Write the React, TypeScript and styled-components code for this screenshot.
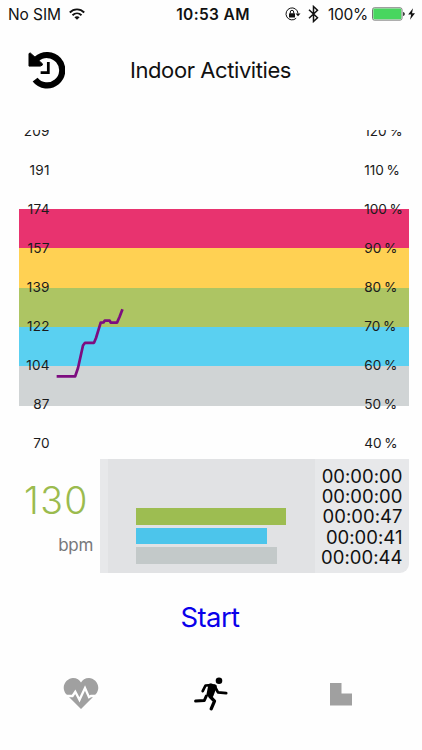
import React from "react";
import styled, { createGlobalStyle } from "styled-components";

const GlobalStyle = createGlobalStyle`
  * { box-sizing: border-box; }
  body { margin: 0; background: #fff; }
`;

const Screen = styled.main`
  display: flex;
  flex-direction: column;
  width: 422px;
  height: 750px;
  overflow: hidden;
  background: #fefefe;
  color: #111;
  font-family: Inter, "Liberation Sans", sans-serif;
`;

const StatusBar = styled.div`
  display: grid;
  grid-template-columns: 1fr auto 1fr;
  align-items: center;
  height: 28px;
  padding: 0 6px 0 8px;
  font-size: 15.5px;
  white-space: nowrap;
`;

const Carrier = styled.div`
  display: flex;
  align-items: center;
  gap: 8.5px;
  letter-spacing: -0.1px;
`;

const Clock = styled.div`
  padding-left: 2px;
  font-weight: 600;
  font-size: 15.5px;
  letter-spacing: 0.35px;
`;

const Indicators = styled.div`
  display: flex;
  align-items: center;
  justify-content: flex-end;
`;

const BluetoothSlot = styled.span`
  display: flex;
  margin-left: 7px;
`;

const Percent = styled.span`
  margin: 0 4px 0 9px;
  letter-spacing: -0.3px;
`;

const Header = styled.header`
  display: grid;
  grid-template-columns: 102px 1fr 102px;
  align-items: center;
  height: 84px;
  padding: 0 0 0 27.5px;
`;

const Title = styled.h1`
  margin: 0 0 0 0.5px;
  font-size: 22px;
  line-height: 28px;
  font-weight: 400;
  letter-spacing: -0.42px;
  white-space: nowrap;
`;

const Chart = styled.section`
  display: grid;
  height: 329.4px;
  margin: 18px 13px 0 19.3px;
  overflow: hidden;
  > * { grid-area: 1 / 1; }
`;

const Bands = styled.div`
  margin-top: 79.2px;
`;

const Band = styled.div<{ $color: string }>`
  height: 39.3px;
  background: ${(p) => p.$color};
`;

const Scale = styled.div`
  margin-top: -18.5px;
  font-size: 13.6px;
`;

const ScaleRow = styled.div`
  display: flex;
  align-items: center;
  justify-content: space-between;
  height: 39px;
  padding-right: 6px;
  color: #1b1b1b;
`;

const Rate = styled.span`
  width: 30.4px;
  text-align: right;
  letter-spacing: 0.2px;
`;

const Share = styled.span`
  width: 39px;
  white-space: nowrap;
  letter-spacing: -0.1px;
  word-spacing: -0.9px;
`;

const Summary = styled.section`
  display: flex;
  height: 114.1px;
  margin-right: 13px;
`;

const HeartRate = styled.div`
  width: 100px;
  padding-top: 20px;
`;

const RateValue = styled.div`
  padding-left: 24px;
  font-size: 37.5px;
  line-height: 44px;
  font-weight: 300;
  letter-spacing: 1.4px;
  color: #9bbb4e;
`;

const RateUnit = styled.div`
  padding-right: 7px;
  margin-top: 12px;
  font-size: 17px;
  line-height: 20px;
  text-align: right;
  letter-spacing: -0.3px;
  color: #77787b;
`;

const Zones = styled.div`
  display: flex;
  flex: 1;
  padding-left: 8px;
  background: #e7e8ea;
  border-radius: 0 0 9px 0;
`;

const ZoneBars = styled.div`
  display: flex;
  flex-direction: column;
  justify-content: flex-end;
  gap: 3px;
  width: 207px;
  padding: 0 0 9.6px 28.3px;
  background: #e1e2e4;
`;

const ZoneBar = styled.div<{ $color: string; $width: number }>`
  width: ${(p) => p.$width}px;
  height: 16.5px;
  background: ${(p) => p.$color};
`;

const ZoneTimes = styled.div`
  flex: 1;
  padding: 6.7px 6.5px 0 0;
  font-size: 18.5px;
  line-height: 20.2px;
  text-align: right;
  letter-spacing: 0.02px;
  white-space: nowrap;
`;

const StartButton = styled.button`
  align-self: center;
  height: 44px;
  margin-top: 21.5px;
  padding: 0 2px 0 0;
  border: 0;
  background: none;
  color: #0a00ea;
  font: 400 27.5px Inter, sans-serif;
  letter-spacing: -0.6px;
`;

const TabBar = styled.nav`
  display: grid;
  grid-template-columns: repeat(3, 130px);
  justify-content: center;
  justify-items: center;
  align-items: center;
  height: 44px;
  margin-top: 33.5px;
`;

const WifiIcon = () => (
  <svg width="16" height="13" viewBox="0 0 16 13" fill="none" stroke="#111" strokeWidth="1.9">
    <path d="M.8 4.5C4.8.3 11.200.3 15.200 4.500M3.500 7.200c2.600-2.500 6.400-2.500 9 0" />
    <path d="M8 11.800 5.400 9.200c1.400-1.200 3.800-1.200 5.200 0Z" fill="#111" stroke="none" />
  </svg>
);

const LockIcon = () => (
  <svg width="16" height="14" viewBox="0 0 16 14" fill="none" stroke="#111" strokeWidth="1">
    <path d="M11.200 11.200A6 6 0 1 1 13 6.500" />
    <path d="M10.500 6.500h5L13 9.200Z" fill="#111" stroke="none" />
    <rect x="4" y="6.200" width="6" height="4.300" rx=".5" fill="#111" stroke="none" />
    <path d="M5.300 6.500V5a1.700 1.700 0 0 1 3.400 0v1.500" />
  </svg>
);

const BluetoothIcon = () => (
  <svg width="11" height="18" viewBox="0 0 11 18" fill="none" stroke="#111" strokeWidth="1.5">
    <path d="m1 4.800 8.500 8L5.500 16.500v-15l4 3.700-8.500 8" />
  </svg>
);

const BatteryIcon = () => (
  <svg width="44" height="14" viewBox="0 0 44 14">
    <rect x=".5" y=".8" width="29.500" height="12.300" rx="1.800" fill="#fff" stroke="#777" />
    <rect x="1.300" y="1.600" width="27.900" height="10.700" rx="1" fill="#48d65f" />
    <path d="M31.200 5c2 .6 2 3.400 0 4Z" fill="#111" />
    <path d="M41 1.200 36.200 7.500h3L38 12.800l5-6.500h-3Z" fill="#111" />
  </svg>
);

const HistoryIcon = () => (
  <svg width="37.500" height="37.500" viewBox="0 0 38 38" fill="none" stroke="#000">
    <path d="M8.800 8.200A15.400 15.400 0 1 1 7.200 29" strokeWidth="6.300" />
    <path d="M1 2.600 2.300 2 14.500 12.800v1.500l-2 1H1Z" fill="#000" strokeWidth="1" strokeLinejoin="round" />
    <path d="M20.600 11.200v10.600h-7.800" strokeWidth="2.800" />
  </svg>
);

const HeartIcon = () => (
  <svg width="38" height="34" viewBox="0 0 38 34">
    <path
      d="M19 32 4 17C-2 9 5 1 11 1c4 0 6.500 1.800 8 4.500C20.500 2.800 23 1 27 1c6 0 13 8 7 16Z"
      fill="#a0a0a0"
    />
    <path d="M1 19h9.500l2.800-4.200 4.200 8L23 11l4 9.200 2-1.200h8" fill="none" stroke="#fff" strokeWidth="2.300" />
  </svg>
);

const RunnerIcon = () => (
  <svg width="36" height="36" viewBox="0 0 36 36" fill="none" stroke="#000" strokeLinecap="round" strokeLinejoin="round">
    <circle cx="26" cy="4.700" r="3.300" fill="#000" stroke="none" />
    <path d="M9.700 15.200 12.500 9.500 18.500 9.200" strokeWidth="2.700" />
    <path d="M21.500 10 25 16.300l8.200.8" strokeWidth="2.700" />
    <path d="m17.300 9.500 4.500 1-3.300 8.700-3-.7Z" fill="#000" strokeWidth="4" />
    <path d="m17 20.500 4.500 4.700-3.300 7.600" strokeWidth="3.300" />
    <path d="m13.300 20-2 4.500-8.700.6" strokeWidth="3" />
  </svg>
);

const BlocksIcon = () => (
  <svg width="24" height="24" viewBox="0 0 24 24">
    <path d="M1 1h11.500v10.500H23V23.500H1Z" fill="#a0a0a0" />
  </svg>
);

const TracePlot = styled.svg`
  width: 390px;
  height: 329px;
`;

const bandColors = ["#e8336f", "#ffd153", "#adc563", "#5ad0f1", "#d0d4d5"];

const scale = [
  [209, 120], [191, 110], [174, 100], [157, 90], [139, 80],
  [122, 70], [104, 60], [87, 50], [70, 40],
];

const zones = [
  { color: "#9dbd51", width: 150.2 },
  { color: "#4cc5eb", width: 131.2 },
  { color: "#c3c9c9", width: 140.7 },
];

const times = ["00:00:00", "00:00:00", "00:00:47", "00:00:41", "00:00:44"];

export default function App() {
  return (
    <Screen>
      <GlobalStyle />
      <StatusBar>
        <Carrier>No SIM <WifiIcon /></Carrier>
        <Clock>10:53 AM</Clock>
        <Indicators>
          <LockIcon />
          <BluetoothSlot><BluetoothIcon /></BluetoothSlot>
          <Percent>100%</Percent>
          <BatteryIcon />
        </Indicators>
      </StatusBar>
      <Header>
        <HistoryIcon />
        <Title>Indoor Activities</Title>
      </Header>
      <Chart>
        <Bands>
          {bandColors.map((c) => <Band key={c} $color={c} />)}
        </Bands>
        <Scale>
          {scale.map(([bpm, pct]) => (
            <ScaleRow key={bpm}>
              <Rate>{bpm}</Rate>
              <Share>{pct} %</Share>
            </ScaleRow>
          ))}
        </Scale>
        <TracePlot viewBox="19.300 130 390 329">
          <polyline
            points="58.300,376.300 75.500,376.300 78.300,368 83.300,345.500 85.300,342.800 94.300,342.800 96.300,338 101,322.600 104,322.300 105,320.600 110,320.600 111,322.600 117.300,322.600 119.800,317 122.300,310.500"
            fill="none"
            stroke="#7d0c80"
            strokeWidth="2.700"
            strokeLinejoin="round"
            strokeLinecap="square"
          />
        </TracePlot>
      </Chart>
      <Summary>
        <HeartRate>
          <RateValue>130</RateValue>
          <RateUnit>bpm</RateUnit>
        </HeartRate>
        <Zones>
          <ZoneBars>
            {zones.map((z) => <ZoneBar key={z.color} $color={z.color} $width={z.width} />)}
          </ZoneBars>
          <ZoneTimes>
            {times.map((t, i) => <div key={i}>{t}</div>)}
          </ZoneTimes>
        </Zones>
      </Summary>
      <StartButton>Start</StartButton>
      <TabBar>
        <HeartIcon />
        <RunnerIcon />
        <BlocksIcon />
      </TabBar>
    </Screen>
  );
}
